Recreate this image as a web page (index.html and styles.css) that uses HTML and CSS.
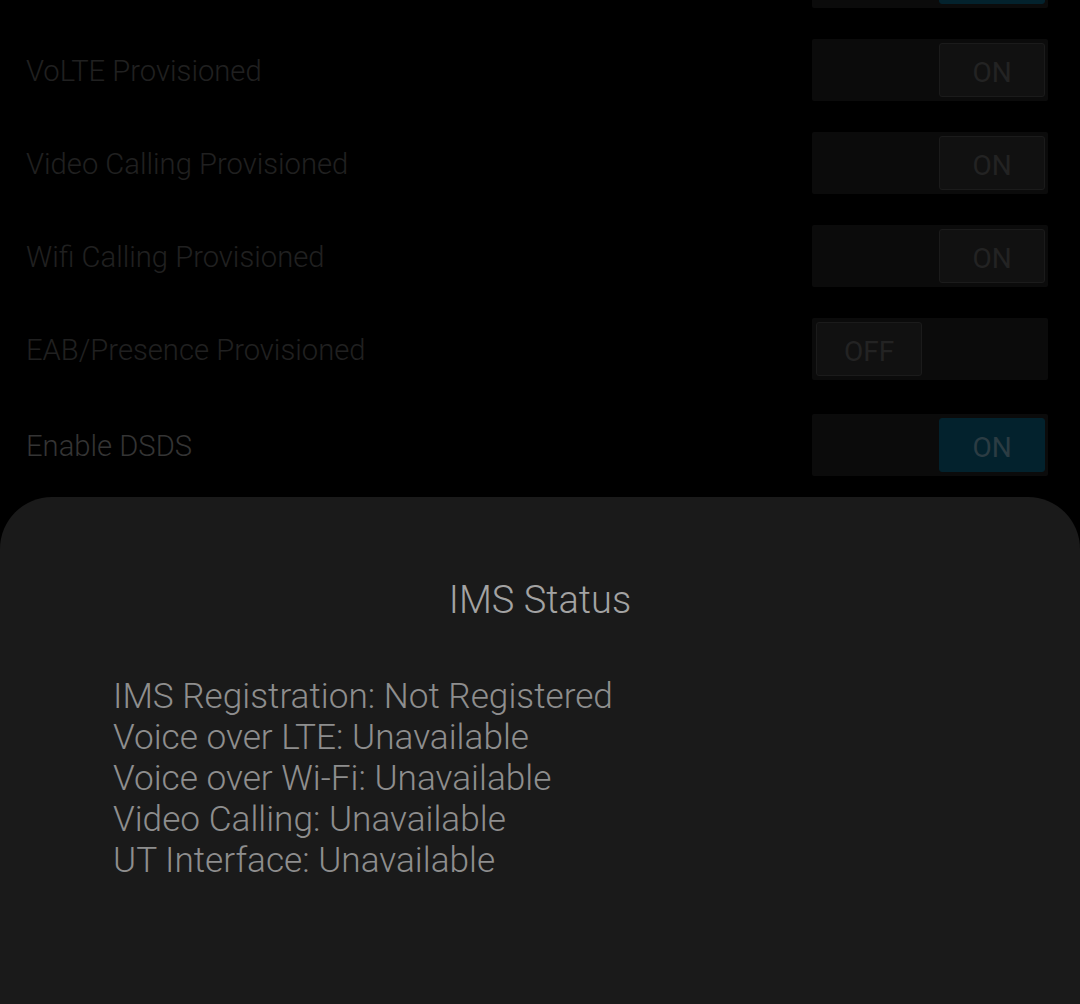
FILE: index.html
```html
<!DOCTYPE html>
<html lang="en">
<head>
  <title>Phone Info</title>
  <meta charset="UTF-8">
  <meta name="viewport" content="width=device-width, initial-scale=1">
  <link rel="stylesheet" href="styles.css">
</head>
<body>
  <div class="settings">
    <div class="setting-row partial">
      <span class="label"></span>
      <div class="switch on"><div class="thumb active"></div></div>
    </div>
    <div class="setting-row">
      <span class="label">VoLTE Provisioned</span>
      <div class="switch on"><div class="thumb">ON</div></div>
    </div>
    <div class="setting-row">
      <span class="label">Video Calling Provisioned</span>
      <div class="switch on"><div class="thumb">ON</div></div>
    </div>
    <div class="setting-row">
      <span class="label">Wifi Calling Provisioned</span>
      <div class="switch on"><div class="thumb">ON</div></div>
    </div>
    <div class="setting-row">
      <span class="label">EAB/Presence Provisioned</span>
      <div class="switch"><div class="thumb">OFF</div></div>
    </div>
    <div class="setting-row enabled">
      <span class="label">Enable DSDS</span>
      <div class="switch on"><div class="thumb active">ON</div></div>
    </div>
  </div>

  <div class="sheet">
    <h2 class="sheet-title">IMS Status</h2>
    <div class="sheet-body">
      <div>IMS Registration: Not Registered</div>
      <div>Voice over LTE: Unavailable</div>
      <div>Voice over Wi-Fi: Unavailable</div>
      <div>Video Calling: Unavailable</div>
      <div>UT Interface: Unavailable</div>
    </div>
  </div>
</body>
</html>
```

FILE: styles.css
```css
:root {
  --bg-color: #000000;
  --sheet-bg: #1a1a1a;
  --label-dim: #202020;
  --label-color: #343434;
  --track-bg: #0b0b0b;
  --thumb-bg: #111111;
  --thumb-border: #1b1b1b;
  --thumb-text: #232323;
  --thumb-active: #03222d;
  --thumb-active-text: #2b3c43;
  --title-color: #a3a3a3;
  --body-color: #8e8e8e;
}
html, body {
  margin: 0;
  padding: 0;
  height: 100%;
  overflow: hidden;
}
body {
  font-family: Roboto, 'Noto Sans', sans-serif;
  background-color: var(--bg-color);
  color: var(--label-dim);
}
.settings {
  display: flex;
  flex-direction: column;
  gap: 31px;
  margin-top: -54px;
  padding: 0 32px 0 26px;
}
.setting-row {
  display: flex;
  align-items: center;
  justify-content: space-between;
  height: 62px;
}
.setting-row.enabled {
  margin-top: 3px;
}
.label {
  font-size: 29.2px;
  font-weight: 300;
  color: var(--label-dim);
  padding-top: 2px;
}
.setting-row.enabled .label {
  color: var(--label-color);
}
.switch {
  width: 236px;
  height: 62px;
  box-sizing: border-box;
  padding: 4px 3px 4px 4px;
  background-color: var(--track-bg);
  border-radius: 2px;
  display: flex;
  justify-content: flex-start;
}
.switch.on {
  justify-content: flex-end;
}
.thumb {
  width: 106px;
  height: 54px;
  box-sizing: border-box;
  background-color: var(--thumb-bg);
  border: 1px solid var(--thumb-border);
  border-radius: 3px;
  color: var(--thumb-text);
  font-size: 28px;
  display: flex;
  align-items: center;
  justify-content: center;
  padding-top: 5px;
}
.thumb.active {
  background-color: var(--thumb-active);
  border-color: var(--thumb-active);
  color: var(--thumb-active-text);
}
.sheet {
  position: fixed;
  top: 497px;
  left: 0;
  right: 0;
  bottom: 0;
  background-color: var(--sheet-bg);
  border-radius: 52px 52px 0 0;
}
.sheet-title {
  margin: 79px 0 0;
  text-align: center;
  font-size: 38px;
  font-weight: 300;
  line-height: 48px;
  color: var(--title-color);
}
.sheet-body {
  margin-top: 52px;
  padding-left: 113px;
  font-size: 35.2px;
  font-weight: 300;
  line-height: 41px;
  color: var(--body-color);
}
```
